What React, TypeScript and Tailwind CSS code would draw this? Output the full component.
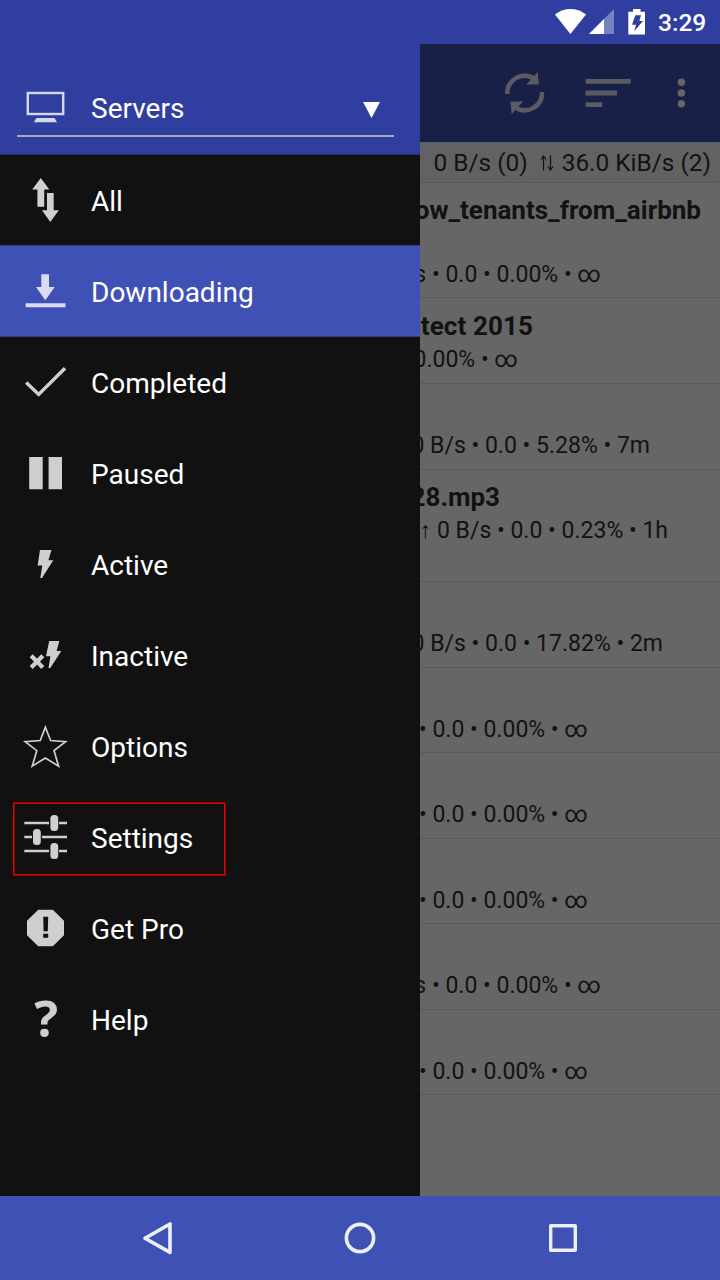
import React from "react";

type MenuItem = { label: string; row: string; icon: React.ReactNode; marked?: boolean };

const MENU: MenuItem[] = [
  {
    label: "All",
    row: "h-[90px]",
    icon: <path d="M40.8 23 49.3 34.6H44.2V51.8H37.4V34.6H32.2ZM47 38H53.7V55.2H58.8L50.3 67 42 55.2H47Z" />,
  },
  {
    label: "Downloading",
    row: "h-[92px] border-y border-[#303d88] bg-[#3f51b5]",
    icon: <path d="M41.3 28.3H49V41H54.7L45.3 54.3 36 41H41.3ZM25.7 57.3H65.5V61.3H25.7Z" />,
  },
  {
    label: "Completed",
    row: "h-[91px]",
    icon: <path d="M26.2 45.5 38.7 57.4 65 31.3" fill="none" stroke="currentColor" strokeWidth="3.5" />,
  },
  { label: "Paused", row: "h-[91px]", icon: <path d="M29.2 29H42.7V61.2H29.2ZM48.6 29H62V61.2H48.6Z" /> },
  {
    label: "Active",
    row: "h-[91px]",
    icon: <path d="M40 31H51.5L48.4 41.2H53.3L42 59H40.3L42.3 46.6H37.6Z" />,
  },
  {
    label: "Inactive",
    row: "h-[91px]",
    icon: (
      <>
        <path d="M49.2 31H59.4L56.6 41H61.3L50.3 58H48.5L50.4 46.2H46Z" />
        <path d="M31.2 45.8 42.8 57.4M42.8 45.8 31.2 57.4" stroke="currentColor" strokeWidth="4.2" />
      </>
    ),
  },
  {
    label: "Options",
    row: "h-[91px]",
    icon: (
      <path
        d="M45.4 26.2 50.6 39.5 65.6 40.6 54 49.5 58.6 65.2 45.4 57 32.2 65.2 36.8 49.7 25.2 40.6 40.2 39.5Z"
        fill="none"
        stroke="currentColor"
        strokeWidth="1.7"
      />
    ),
  },
  {
    label: "Settings",
    row: "h-[91px]",
    marked: true,
    icon: (
      <>
        <path
          d="M24.3 31H49M59 31H67M24.3 45H32M42 45H67M24.3 59H49M59 59H67"
          stroke="currentColor"
          strokeWidth="2.4"
        />
        <rect x="50.4" y="23" width="7.8" height="16" rx="3.5" />
        <rect x="33" y="37" width="7.8" height="16" rx="3.5" />
        <rect x="50.4" y="51" width="7.8" height="16" rx="3.5" />
      </>
    ),
  },
  {
    label: "Get Pro",
    row: "h-[91px]",
    icon: (
      <>
        <path d="M38.2 26.7H52.8L64 37.8V52.2L52.8 63.3H38.2L27 52.2V37.8Z" />
        <path d="M43.2 33.7H48.2L47.8 48.2H43.6ZM43.2 50.7H48.2V54.8H43.2Z" fill="#111" />
      </>
    ),
  },
  {
    label: "Help",
    row: "h-[91px]",
    icon: (
      <text x="46.3" y="63" textAnchor="middle" fontSize="50" fontWeight="700" fontFamily="Open Sans, sans-serif">
        ?
      </text>
    ),
  },
];

type Torrent = { name?: string; info: string; row: string; nameBox?: string; infoBox: string };

const TORRENTS: Torrent[] = [
  { name: "ow_tenants_from_airbnb", info: "s • 0.0 • 0.00% • ∞", row: "h-[115px] pt-[11px]", nameBox: "w-[281px]", infoBox: "mt-[33px] w-[181px]" },
  { name: "tect 2015", info: "0.00% • ∞", row: "h-[86px] pt-[12px]", nameBox: "w-[113px] tracking-[0.1px]", infoBox: "mt-[2px] w-[98px]" },
  { info: "0 B/s • 0.0 • 5.28% • 7m", row: "h-[86px] pt-[47px]", infoBox: "w-[230px]" },
  { name: "28.mp3", info: "↑ 0 B/s • 0.0 • 0.23% • 1h", row: "h-[112px] pt-[11px]", nameBox: "w-[80px]", infoBox: "mt-[2px] w-[248px]" },
  { info: "0 B/s • 0.0 • 17.82% • 2m", row: "h-[86px] pt-[47px]", infoBox: "w-[243px]" },
  { info: "• 0.0 • 0.00% • ∞", row: "h-[85px] pt-[47px]", infoBox: "w-[168px]" },
  { info: "• 0.0 • 0.00% • ∞", row: "h-[86px] pt-[47px]", infoBox: "w-[168px]" },
  { info: "• 0.0 • 0.00% • ∞", row: "h-[85px] pt-[47px]", infoBox: "w-[168px]" },
  { info: "s • 0.0 • 0.00% • ∞", row: "h-[86px] pt-[47px]", infoBox: "w-[181px]" },
  { info: "• 0.0 • 0.00% • ∞", row: "h-[85px] pt-[47px]", infoBox: "w-[168px]" },
];

function StatusBar() {
  return (
    <header className="flex h-11 shrink-0 items-center bg-[#303f9f] pl-[550px] text-white">
      <svg className="h-11 w-[100px]" viewBox="550 0 100 44" fill="currentColor">
        <path d="M555 14.4Q570.5 3.6 586 14.4L570.4 34Z" />
        <path d="M614 9V34H589Z" opacity=".35" />
        <path d="M604 19V34H589Z" />
        <path
          fillRule="evenodd"
          d="M633 9H640.5V11.7H645V34.6H628.3V11.7H633ZM635.3 15.3 632 24.7H636L634.2 31.3 643 21H639.4L641 15.3Z"
        />
      </svg>
      <span className="ml-2 pt-[2px] text-[24.5px] font-medium">3:29</span>
    </header>
  );
}

function Toolbar() {
  return (
    <div className="h-[98px] shrink-0 bg-[#192048] text-[#5a5b63]">
      <svg className="h-[98px] w-[300px]" viewBox="420 44 300 98" fill="currentColor">
        <path d="M507.4 94A17.3 17.3 0 0 1 534 78.5" fill="none" stroke="currentColor" strokeWidth="4.6" />
        <path d="M537.7 72 538.8 84.3 526.2 84.7Z" />
        <path d="M542 92A17.3 17.3 0 0 1 515.4 107.5" fill="none" stroke="currentColor" strokeWidth="4.6" />
        <path d="M511.7 114 510.4 101.7 523.2 101.3Z" />
        <path d="M585.6 79H630.7V83.8H585.6ZM585.6 90.6H617V95.4H585.6ZM585.6 102.3H602.2V107H585.6Z" />
        <g fill="#65656a">
          <circle cx="681.4" cy="82.3" r="3.7" />
          <circle cx="681.4" cy="93" r="3.7" />
          <circle cx="681.4" cy="103.7" r="3.7" />
        </g>
      </svg>
    </div>
  );
}

function Drawer() {
  return (
    <nav className="w-[420px] shrink-0 bg-[#111]">
      <div className="h-[111px] border-b border-[#252e70] bg-[#303f9f] pt-[37px]">
        <div className="ml-[17px] mr-[26px] flex h-14 items-center border-b-2 border-[#aaabb0] pl-2">
          <svg className="h-10 w-10 text-[#d6d9ec]" viewBox="25 88 40 40" fill="currentColor">
            <rect x="27.8" y="93" width="35.4" height="21" fill="none" stroke="currentColor" strokeWidth="2.4" />
            <path d="M36.5 118H54.5L57 122.3H33.8Z" />
          </svg>
          <span className="ml-[26px] flex-1 pt-[2px] text-[28px] leading-8 text-white">Servers</span>
          <svg className="mr-[14px] mt-[3px] h-4 w-[17px] text-white" viewBox="0 0 17 16" fill="currentColor">
            <path d="M0 0H17L8.5 16Z" />
          </svg>
        </div>
      </div>
      <ul>
        {MENU.map((m) => (
          <li key={m.label} className={`relative flex ${m.row}`}>
            <svg
              className={`h-[91px] w-[91px] shrink-0 overflow-visible ${m.label === "Downloading" ? "text-[#d9dcf0]" : "text-[#cfcfcf]"}`}
              viewBox="0 0 91 91"
              fill="currentColor"
            >
              {m.icon}
            </svg>
            <span className="mt-[31px] text-[28px] leading-8 text-white">{m.label}</span>
            {m.marked && (
              <span className="absolute left-[13px] top-[10px] flex h-[74px] w-[213px] border border-[#850808] border-l-[#e80000]">
                <span className="flex-1 border border-[#e80000] border-l-[#850808]" />
              </span>
            )}
          </li>
        ))}
      </ul>
    </nav>
  );
}

function Content() {
  return (
    <main className="flex w-[300px] flex-col overflow-hidden bg-[#666] text-[#121212]">
      <Toolbar />
      <div className="flex h-[41px] shrink-0 items-center justify-end whitespace-nowrap rounded-br border-b border-[#585858] bg-[#626262] pr-[9px] pt-[2px] text-[24.4px]">
        <span>0 B/s (0)</span>
        <svg className="ml-[12px] mr-[8px] h-4 w-[14px]" viewBox="0 0 14 16" fill="none" stroke="currentColor" strokeWidth="1.2">
          <path d="M3.5 15.5V1M1 4.5 3.5 1 6 4.5M10.5 .5V15M8 11.5 10.5 15 13 11.5" />
        </svg>
        <span>36.0 KiB/s (2)</span>
      </div>
      {TORRENTS.map((t, i) => (
        <section key={i} className={`shrink-0 border-b border-[#5a5a5a] ${t.row}`}>
          {t.name && (
            <h2 className={`flex h-[33px] justify-end whitespace-nowrap text-[26px] font-bold leading-[33px] ${t.nameBox}`}>{t.name}</h2>
          )}
          <p className={`flex h-[30px] justify-end whitespace-nowrap text-[23px] leading-[30px] ${t.infoBox}`}>{t.info}</p>
        </section>
      ))}
    </main>
  );
}

export default function App() {
  return (
    <div className="flex h-[1280px] w-[720px] flex-col overflow-hidden font-[Roboto,sans-serif]">
      <StatusBar />
      <div className="flex h-[1152px] shrink-0">
        <Drawer />
        <Content />
      </div>
      <footer className="flex h-[84px] shrink-0 items-center justify-between bg-[#3f51b5] px-[137px] text-[#eceef8]">
        <svg className="h-10 w-10" viewBox="137 1218 40 40" fill="none" stroke="currentColor" strokeWidth="3.6" strokeLinejoin="round">
          <path d="M170 1224V1252.4L145 1238.3Z" />
        </svg>
        <svg className="h-10 w-10" viewBox="340 1218 40 40" fill="none" stroke="currentColor" strokeWidth="3.6">
          <circle cx="360" cy="1238" r="13.6" />
        </svg>
        <svg className="h-10 w-10" viewBox="543 1218 40 40" fill="none" stroke="currentColor" strokeWidth="3.4" strokeLinejoin="round">
          <path d="M550.7 1225.7H575.3V1250.3H550.7Z" />
        </svg>
      </footer>
    </div>
  );
}
